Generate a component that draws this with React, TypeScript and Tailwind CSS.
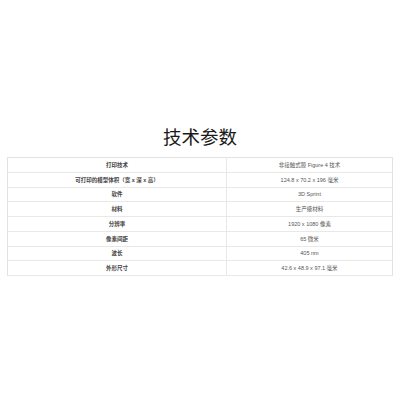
const rows: [string, string][] = [
  ["打印技术", "非接触式膜 Figure 4 技术"],
  ["可打印的模型体积（宽 x 深 x 高）", "124.8 x 70.2 x 196 毫米"],
  ["软件", "3D Sprint"],
  ["材料", "生产级材料"],
  ["分辨率", "1920 x 1080 像素"],
  ["像素间距", "65 微米"],
  ["波长", "405 nm"],
  ["外形尺寸", "42.6 x 48.9 x 97.1 毫米"],
];

export default function App() {
  return (
    <div className="min-h-[400px] w-[400px] bg-white px-[7px] pt-[124px] font-['Liberation_Sans','Noto_Sans_CJK_SC',sans-serif]">
      <h2 className="text-center text-[18.5px] leading-[28px] text-[#1a1a1a]">技术参数</h2>
      <table className="mt-[5px] w-full border-collapse border border-[#e2e2e2] text-[5.5px] text-[#555]">
        <tbody>
          {rows.map(([k, v]) => (
            <tr key={k} className="h-[14.75px] border-b border-[#e8e8e8]">
              <td className="w-[219px] border-r border-[#e8e8e8] p-0 text-center font-bold text-[#444]">{k}</td>
              <td className="p-0 text-center">{v}</td>
            </tr>
          ))}
        </tbody>
      </table>
    </div>
  );
}
